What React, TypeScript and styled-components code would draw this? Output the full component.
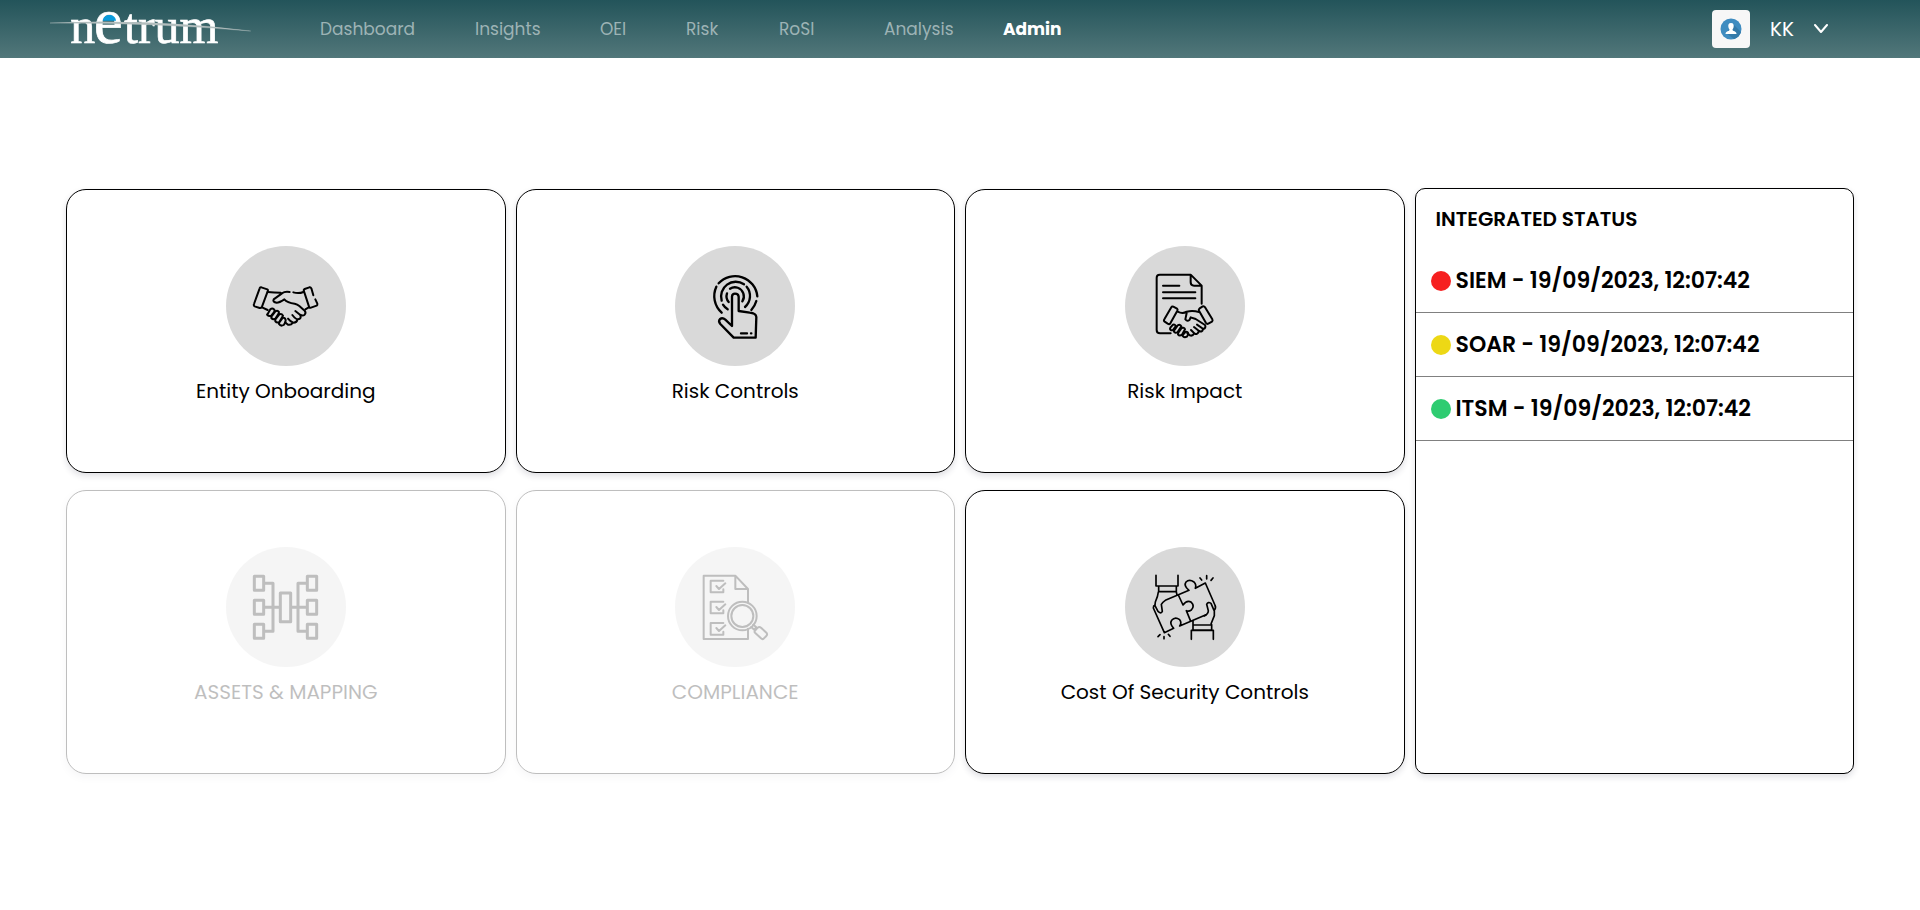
import React from "react";
import styled, { createGlobalStyle } from "styled-components";

const GlobalStyle = createGlobalStyle`
  *, *::before, *::after { box-sizing: border-box; }
  body {
    margin: 0;
    background: #fff;
    color: #000;
    font-family: Poppins, Inter, "Liberation Sans", sans-serif;
  }
  button { font: inherit; color: inherit; }
`;

const Header = styled.header`
  display: flex;
  align-items: center;
  height: 58px;
  padding: 0 92px 0 50px;
  background: linear-gradient(#23545a, #52777a);
`;

const LogoLink = styled.a`
  display: block;
  flex: none;
  width: 200px;
  height: 58px;
  margin-right: 70px;
`;

const LogoSvg = styled.svg`
  display: block;
  width: 100%;
  height: 100%;
  overflow: visible;
`;

const Nav = styled.nav`
  display: grid;
  grid-template-columns: 155px 125px 86px 93px 105px 119px auto;
  align-items: center;
`;

const NavLink = styled.a<{ $active?: boolean }>`
  color: ${(p) => (p.$active ? "#fff" : "#9db3b5")};
  font-size: 17px;
  font-weight: ${(p) => (p.$active ? 700 : 400)};
  line-height: 24px;
  text-decoration: none;
  white-space: nowrap;
`;

const UserMenu = styled.button`
  display: flex;
  align-items: center;
  gap: 20px;
  margin-left: auto;
  padding: 0;
  border: 0;
  background: none;
  color: #fff;
  font-size: 20px;
  line-height: 24px;
  cursor: pointer;
`;

const Avatar = styled.span`
  display: grid;
  place-items: center;
  width: 38px;
  height: 38px;
  border-radius: 4px;
  background: #f7f7f7;
`;

const Main = styled.main`
  display: grid;
  grid-template-columns: repeat(4, minmax(0, 1fr));
  column-gap: 10px;
  padding: 130px 66px 64px;
`;

const Cards = styled.section`
  display: grid;
  grid-column: span 3;
  grid-template-columns: repeat(3, minmax(0, 1fr));
  gap: 17px 10px;
  padding-top: 1px;
`;

const Card = styled.button`
  display: flex;
  flex-direction: column;
  align-items: center;
  gap: 10px;
  height: 284px;
  padding: 56px 16px 0;
  border: 1px solid #000;
  border-radius: 20px;
  background: #fff;
  box-shadow: 0 3px 6px rgba(30, 30, 60, 0.14);
  cursor: pointer;

  &:disabled {
    color: #000;
    opacity: 0.25;
    cursor: default;
  }
`;

const IconCircle = styled.span`
  display: block;
  width: 120px;
  height: 120px;
  border-radius: 50%;
  background: #d9d9d9;
`;

const IconSvg = styled.svg`
  display: block;
  width: 100%;
  height: 100%;
  fill: none;
  stroke: #000;
  stroke-linecap: round;
  stroke-linejoin: round;
`;

const CardLabel = styled.span`
  font-size: 20px;
  line-height: 30px;
`;

const StatusPanel = styled.section`
  border: 1px solid #000;
  border-radius: 10px;
  background: #fff;
  box-shadow: 0 3px 6px rgba(30, 30, 60, 0.14);
`;

const StatusTitle = styled.h2`
  margin: 0;
  padding: 0 20px;
  font-size: 20px;
  font-weight: 600;
  line-height: 60px;
`;

const StatusList = styled.ul`
  margin: 0;
  padding: 0;
  list-style: none;
`;

const StatusRow = styled.li`
  display: flex;
  align-items: center;
  gap: 5px;
  height: 64px;
  padding: 0 15px;
  border-bottom: 1px solid #808080;
  font-size: 22px;
  font-weight: 600;
  white-space: nowrap;
`;

const Dot = styled.span<{ $color: string }>`
  flex: none;
  width: 20px;
  height: 20px;
  border-radius: 50%;
  background: ${(p) => p.$color};
`;

const Logo = () => (
  <LogoSvg viewBox="30 0 600 174" aria-hidden="true">
    <g fill="#fff" stroke="#fff" strokeWidth="2" fontFamily="Liberation Serif, serif">
      <text x="91" y="129" fontSize="150">n</text>
      <text x="161" y="129" fontSize="196">e</text>
      <text x="252" y="129" fontSize="150">trum</text>
    </g>
    <path d="M188 62 C190 40 226 38 228 62Z" fill="#0a9bdc" />
    <path d="M30 69 Q340 56 632 93 Q340 68 30 69Z" fill="#b3bebe" stroke="#b3bebe" strokeWidth="1" />
  </LogoSvg>
);

const HandshakeIcon = () => (
  <IconSvg viewBox="30 30 360 360" strokeWidth="6" aria-hidden="true">
    <path d="M136 154 154 160Q157 162 155 166L138 212Q136 217 131 216L116 211Q112 209 114 204L131 157Q132 153 136 154Z" />
    <path d="M292 178 286 157Q284 153 280 154L266 159Q262 161 264 166L279 212Q280 217 285 215L302 209Q305 207 304 203L298 190" />
    <path d="M155 168Q175 170 194 170M138 214 155 222M221 168Q207 165 198 172L173 190Q169 198 182 200Q190 200 205 190Q214 200 236 203Q244 205 250 210L266 224Q271 231 266 236Q260 241 252 236L238 225" />
    <path d="M232 169Q248 174 262 168M277 215 268 220M253 237Q257 248 246 250Q239 250 229 237M244 251Q243 260 232 260Q224 258 216 248M230 261Q225 268 216 266L207 259" />
    <path d="M155 234 163 220Q169 215 174 220Q178 223 173 230L166 239Q159 242 154 237Q152 235 155 234ZM166 242 178 226Q185 222 189 228L187 234 178 248Q171 252 166 246ZM178 250 190 235Q197 232 201 239L190 258Q183 262 178 256ZM190 259 200 246Q207 244 209 252Q210 261 203 267Q194 272 189 264Z" />
  </IconSvg>
);

const TouchIcon = () => (
  <IconSvg viewBox="27 30 360 360" strokeWidth="7" aria-hidden="true">
    <path d="M198 270V181Q199 173 207 173Q217 173 218 182V225L251 230Q270 232 271 243L269 305H203L163 264Q156 255 162 249Q170 244 178 251L198 270" />
    <path d="M158 142A67 67 0 0 1 274 181M151 152A67 67 0 0 0 167 230M271 195A67 67 0 0 1 256 222" />
    <path d="M167 194A44 44 0 0 1 234 145M242 152A44 44 0 0 1 237 213M171 206A44 44 0 0 0 185 220" />
    <path d="M192 158A27 27 0 0 1 232 172A27 27 0 0 1 229 196M183 172A27 27 0 0 0 188 198" />
    <path d="M225 292H243M255 292H256" />
  </IconSvg>
);

const AgreementIcon = () => (
  <IconSvg viewBox="30 30 360 360" strokeWidth="6" aria-hidden="true">
    <path d="M167 292H135Q125 292 125 282V125Q125 116 134 116H227L260 149V203M227 116V139Q227 149 237 149H260M144 149H193M144 169H241M144 187H241" />
    <path d="M175 212 186 218Q189 220 187 224L166 262Q163 266 158 263L149 257Q145 254 148 250L169 214Q171 210 175 212ZM263 211 254 217Q250 220 252 224L273 261Q276 265 280 263L291 257Q294 254 292 250L271 215Q267 209 263 211Z" />
    <path d="M188 227Q203 235 215 227Q233 223 252 228M215 231 211 250Q216 258 224 251L227 244 242 249 270 267Q274 276 265 279L246 266M264 279Q262 290 252 285L237 273M251 287Q247 298 238 292L228 282M237 293Q233 301 224 298L217 292" />
    <path d="M166 275 174 266Q181 264 182 271L174 282Q167 285 165 279ZM177 284 188 268Q196 264 199 271L188 288Q181 293 177 287ZM190 290 200 276Q208 273 210 280L201 296Q193 301 189 295ZM203 297 211 288Q219 286 220 294L216 302Q207 306 203 300Z" />
  </IconSvg>
);

const MappingIcon = () => (
  <IconSvg viewBox="30 33 360 360" strokeWidth="9" aria-hidden="true">
    <path d="M115 121H143V163H115ZM115 193H143V235H115ZM115 265H143V307H115ZM274 121H302V163H274ZM274 193H302V235H274ZM274 265H302V307H274ZM193 171H224V257H193Z" />
    <path d="M147 142H171V286H147M147 214H190M271 142H246V286H271M271 214H228" />
  </IconSvg>
);

const ComplianceIcon = () => (
  <IconSvg viewBox="27 33 360 360" strokeWidth="6" aria-hidden="true">
    <path d="M246 200V159L208 119H113V309H246V278M208 119V159H246" />
    <path d="M172 134H134V169H172V160M172 197H134V232H172V223M172 261H134V296H172V287M151 150 159 159 178 142M151 213 159 222 178 205M151 276 159 285 178 268" />
    <circle cx="229" cy="240" r="43" />
    <circle cx="229" cy="240" r="33" />
    <path d="M256 273 264 281 271 274 262 266M266 285 275 275Q280 271 285 275L302 291Q305 295 301 300L293 308Q289 311 285 307L267 290Q265 288 266 285Z" />
  </IconSvg>
);

const PuzzleIcon = () => (
  <IconSvg viewBox="30 33 360 360" strokeWidth="5" aria-hidden="true">
    <path d="M123 118V150H189V118M131 152V167H184V152M130 168Q129 180 121 198L120 207M184 168 186 177" />
    <path d="M119 208Q115 209 115 216L148 290 176 277Q163 263 170 253Q180 241 194 251Q201 260 194 270L273 236M120 209 129 226Q139 235 142 226L139 205Q143 198 151 193L222 163Q205 149 213 138Q223 128 237 138Q245 146 241 157L271 141 301 210" />
    <path d="M190 177 204 207Q216 191 229 199Q240 210 229 222Q221 227 214 224L226 253M301 210Q303 219 297 223L288 202Q279 196 275 205L280 224Q280 233 268 240M298 224V239L288 264" />
    <path d="M234 255V267H290V280M234 267V282H290V266M229 310V283H295V310" />
    <path d="M255 126 260 132M275 119V129M294 126 288 133M135 296 129 302M147 302V308M160 295 165 301" />
  </IconSvg>
);

const AvatarIcon = () => (
  <svg width="22" height="22" viewBox="0 0 22 22" aria-hidden="true">
    <circle cx="11" cy="11" r="10.5" fill="#3f8cc0" />
    <path d="M13 6 21 14A10.500 10.500 0 0 1 14 21L6 15Z" fill="#347aa9" />
    <path d="M11 5C8.500 5 8 7 8.400 9C8.600 10.500 9.500 11 9.500 12C9.500 13 5.500 13 5.500 16H16.500C16.500 13 12.500 13 12.500 12C12.500 11 13.400 10.500 13.600 9C14 7 13.500 5 11 5Z" fill="#fff" />
  </svg>
);

const ChevronIcon = () => (
  <svg width="14" height="10" viewBox="0 0 14 10" fill="none" stroke="#fff" strokeWidth="2" aria-hidden="true">
    <path d="M1 1 7 8 13 1" strokeLinecap="round" strokeLinejoin="round" />
  </svg>
);

const navItems = ["Dashboard", "Insights", "OEI", "Risk", "RoSI", "Analysis", "Admin"];

const cards = [
  { label: "Entity Onboarding", Icon: HandshakeIcon },
  { label: "Risk Controls", Icon: TouchIcon },
  { label: "Risk Impact", Icon: AgreementIcon },
  { label: "ASSETS & MAPPING", Icon: MappingIcon, disabled: true },
  { label: "COMPLIANCE", Icon: ComplianceIcon, disabled: true },
  { label: "Cost Of Security Controls", Icon: PuzzleIcon },
];

const statuses = [
  { name: "SIEM", time: "19/09/2023, 12:07:42", color: "#f62020" },
  { name: "SOAR", time: "19/09/2023, 12:07:42", color: "#edd815" },
  { name: "ITSM", time: "19/09/2023, 12:07:42", color: "#2ecc71" },
];

export default function App() {
  return (
    <>
      <GlobalStyle />
      <Header>
        <LogoLink href="#" aria-label="netrum">
          <Logo />
        </LogoLink>
        <Nav>
          {navItems.map((item) => (
            <NavLink key={item} href="#" $active={item === "Admin"}>
              {item}
            </NavLink>
          ))}
        </Nav>
        <UserMenu type="button">
          <Avatar>
            <AvatarIcon />
          </Avatar>
          KK
          <ChevronIcon />
        </UserMenu>
      </Header>
      <Main>
        <Cards>
          {cards.map(({ label, Icon, disabled }) => (
            <Card key={label} type="button" disabled={disabled}>
              <IconCircle>
                <Icon />
              </IconCircle>
              <CardLabel>{label}</CardLabel>
            </Card>
          ))}
        </Cards>
        <StatusPanel>
          <StatusTitle>INTEGRATED STATUS</StatusTitle>
          <StatusList>
            {statuses.map((s) => (
              <StatusRow key={s.name}>
                <Dot $color={s.color} />
                {s.name} - {s.time}
              </StatusRow>
            ))}
          </StatusList>
        </StatusPanel>
      </Main>
    </>
  );
}
